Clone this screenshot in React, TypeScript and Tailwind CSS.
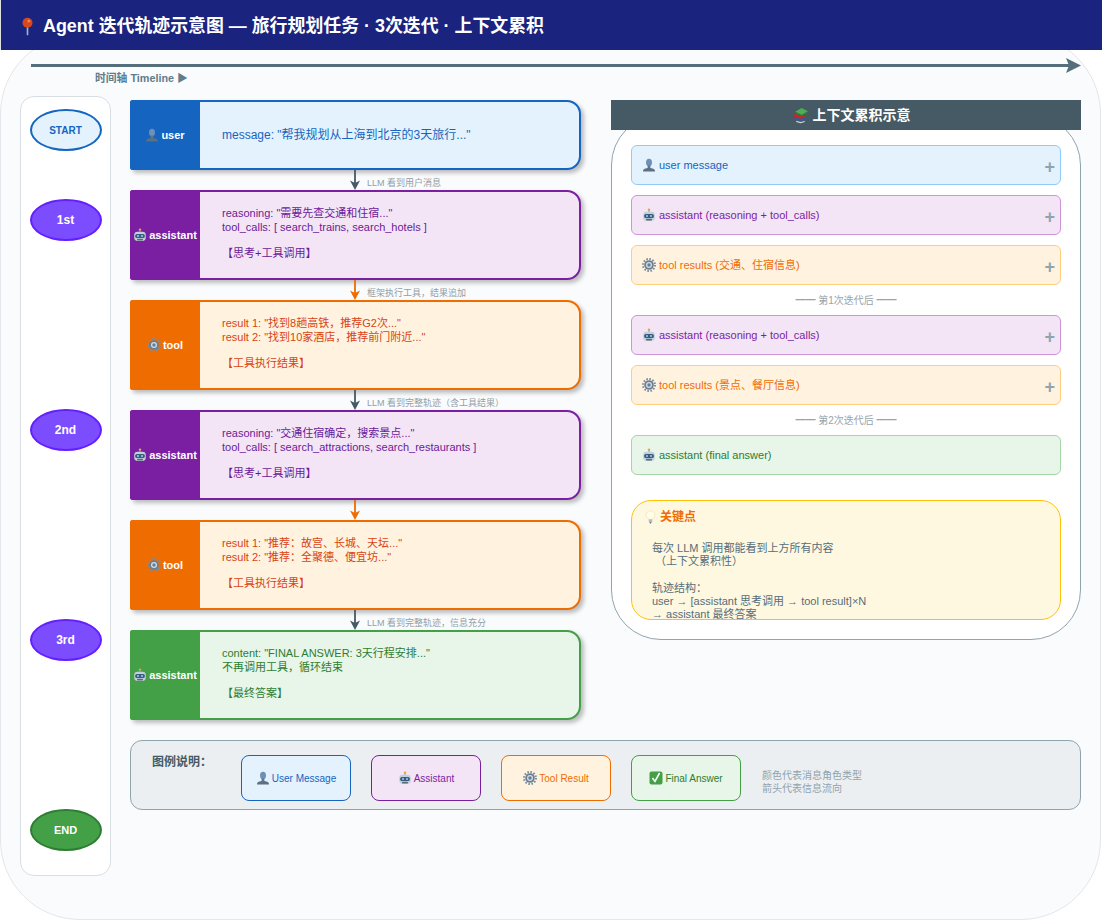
import type { ReactNode } from 'react';

function UserIcon({ className = 'w-[14px] h-[14px]' }: { className?: string }) {
  return (
    <svg viewBox="0 0 14 14" className={`${className} shrink-0`}>
      <ellipse cx="7" cy="4.6" rx="3" ry="3.8" fill="#6f8fb4" />
      <rect x="5.6" y="7.5" width="2.8" height="3" fill="#5f7890" />
      <path d="M1 13.5c0-2.4 2.4-3.4 6-3.4s6 1 6 3.4z" fill="#5c6f84" />
    </svg>
  );
}

function RobotIcon({ className = 'w-[14px] h-[14px]' }: { className?: string }) {
  return (
    <svg viewBox="0 0 14 14" className={`${className} shrink-0`}>
      <circle cx="7" cy="1.6" r="1.2" fill="#f6a623" />
      <rect x="6.5" y="2" width="1" height="2.4" fill="#8d99a6" />
      <rect x="1.2" y="3.8" width="11.6" height="9.2" rx="3.4" fill="#c3d0db" />
      <rect x="2.2" y="6" width="9.6" height="4" rx="1.6" fill="#3d5a80" />
      <circle cx="5" cy="8" r="1" fill="#8fd3f4" />
      <circle cx="9" cy="8" r="1" fill="#8fd3f4" />
      <rect x="4" y="10.8" width="6" height="1.6" rx="0.6" fill="#5b6b7b" />
    </svg>
  );
}

function GearIcon({ className = 'w-[14px] h-[14px]' }: { className?: string }) {
  return (
    <svg viewBox="0 0 14 14" className={`${className} shrink-0`}>
      <circle cx="7" cy="7" r="6" fill="none" stroke="#7e8c99" strokeWidth="2" strokeDasharray="1.6 1.5" />
      <circle cx="7" cy="7" r="4.8" fill="#6b7f92" />
      <circle cx="7" cy="7" r="3" fill="#d5dde4" />
      <circle cx="7" cy="7" r="1.7" fill="#5f7f9e" />
    </svg>
  );
}

function BooksIcon() {
  return (
    <svg viewBox="0 0 16 16" className="w-[17px] h-[17px] shrink-0">
      <path d="M3 4.5 9 1l6 3-6 3.6z" fill="#4caf50" />
      <path d="M3 4.5 9 7.6l6-3v1.4L9 9 3 6z" fill="#2e7d32" />
      <path d="M1.5 7.5 3 6.4 9 9l3-1v1.5L8 11 1.5 9z" fill="#c62828" />
      <path d="M3 10l5 1.6 4-1.2v1.4L8 13.2 3 11.6z" fill="#3f51b5" />
      <path d="M4 13l4 1.2 4-1.1v1L8 15.4 4 14.2z" fill="#cfd8dc" />
    </svg>
  );
}

function PinIcon() {
  return (
    <svg viewBox="0 0 14 20" className="w-[13px] h-[19px] shrink-0">
      <rect x="6.1" y="8" width="1.8" height="11.5" rx="0.9" fill="#9eb2bf" />
      <circle cx="7" cy="6" r="5.4" fill="#d9481c" />
      <circle cx="8.4" cy="4.2" r="1.5" fill="#f08a5d" />
    </svg>
  );
}

function BulbIcon() {
  return (
    <svg viewBox="0 0 12 16" className="w-[11px] h-[15px] shrink-0">
      <circle cx="6" cy="5.4" r="4.8" fill="#fffde7" stroke="#f3e2b3" strokeWidth="0.8" />
      <rect x="4" y="10" width="4" height="2.6" fill="#b7bcc0" />
      <path d="M4.5 12.6h3L6 15z" fill="#6f7b85" />
    </svg>
  );
}

function CheckIcon() {
  return (
    <svg viewBox="0 0 14 14" className="w-[14px] h-[14px] shrink-0">
      <rect x="0.5" y="0.5" width="13" height="13" rx="2" fill="#43a047" />
      <path d="M3.4 7l2.6 3.4L10.6 2" fill="none" stroke="#fff" strokeWidth="1.6" />
    </svg>
  );
}

const stages = [
  { label: 'START', cls: 'mt-[12px] bg-[#e3f2fd] border-[#1565c0] text-[#1565c0] text-[10px]' },
  { label: '1st', cls: 'mt-[48px] bg-[#7c4dff] border-[#651fff] text-white text-[12px]' },
  { label: '2nd', cls: 'mt-[168px] bg-[#7c4dff] border-[#651fff] text-white text-[12px]' },
  { label: '3rd', cls: 'mt-[168px] bg-[#7c4dff] border-[#651fff] text-white text-[12px]' },
  { label: 'END', cls: 'mt-[148px] bg-[#43a047] border-[#2e7d32] text-white text-[11px]' },
];

const roleStyles = {
  user: { card: 'bg-[#e3f2fd] border-[#1565c0]', side: 'bg-[#1565c0]', text: 'text-[#1565c0] text-[12px]' },
  assistant: { card: 'bg-[#f3e5f5] border-[#7b1fa2]', side: 'bg-[#7b1fa2]', text: 'text-[#6a1b9a] text-[11px]' },
  tool: { card: 'bg-[#fff3e0] border-[#ef6c00]', side: 'bg-[#ef6c00]', text: 'text-[#d84315] text-[11px]' },
  final: { card: 'bg-[#e8f5e9] border-[#43a047]', side: 'bg-[#43a047]', text: 'text-[#2e7d32] text-[11px]' },
};

type Role = keyof typeof roleStyles;

function Card({ role, name, icon, lines, tall = true }: { role: Role; name: string; icon: ReactNode; lines: string[]; tall?: boolean }) {
  const s = roleStyles[role];
  return (
    <div className={`flex ${tall ? 'h-[90px]' : 'h-[70px]'} rounded-r-[14px] rounded-l-[3px] border-2 ${s.card} shadow-[3px_3px_4px_rgba(0,0,0,0.25)]`}>
      <div className={`w-[70px] shrink-0 -ml-[2px] -my-[2px] rounded-l-[3px] flex items-center justify-center gap-[2px] text-white text-[11px] font-bold ${s.side}`}>
        {icon}
        <span>{name}</span>
      </div>
      <div className={`flex-1 pl-[22px] ${tall ? 'pb-[2px]' : 'pt-[1px]'} flex flex-col justify-center leading-[13.3px] whitespace-pre ${s.text}`}>
        {lines.map((l, i) => (
          <div key={i} className="h-[13.3px]">{l}</div>
        ))}
      </div>
    </div>
  );
}

function Arrow({ color = '#455a64', label }: { color?: string; label?: string }) {
  return (
    <div className="h-[20px] flex items-center pl-[220px]">
      <svg viewBox="0 0 10 20" className="w-[10px] h-[20px] shrink-0">
        <rect x="4.1" y="0" width="1.8" height="14" fill={color} />
        <path d="M0 10.5 5 13 10 10.5 5 20z" fill={color} />
      </svg>
      {label && <span className="ml-[7px] mt-[7px] text-[9px] text-[#929ea5]">{label}</span>}
    </div>
  );
}

const ctxStyles = {
  user: 'bg-[#e3f2fd] border-[#90caf9] text-[#1565c0]',
  assistant: 'bg-[#f3e5f5] border-[#ce93d8] text-[#7b1fa2]',
  tool: 'bg-[#fff3e0] border-[#ffcc80] text-[#ef6c00]',
  final: 'bg-[#e8f5e9] border-[#a5d6a7] text-[#2e7d32]',
};

function CtxItem({ kind, icon, text, plus = true }: { kind: keyof typeof ctxStyles; icon: ReactNode; text: string; plus?: boolean }) {
  return (
    <div className={`h-[40px] shrink-0 rounded-[6px] border flex items-center justify-between pl-[10px] pr-[5px] text-[11px] ${ctxStyles[kind]}`}>
      <div className="flex items-center gap-[3px]">
        {icon}
        <span>{text}</span>
      </div>
      {plus && <span className="mt-[3px] text-[18px] leading-none font-bold text-[#90a4ae]">+</span>}
    </div>
  );
}

function Separator({ text }: { text: string }) {
  return <div className="h-[30px] pt-[1px] flex items-center justify-center text-[10px] text-[#9aa3a8]">{text}</div>;
}

const legend = [
  { cls: 'bg-[#e3f2fd] border-[#1565c0] text-[#1565c0]', icon: <UserIcon />, label: 'User Message' },
  { cls: 'bg-[#f3e5f5] border-[#7b1fa2] text-[#7b1fa2]', icon: <RobotIcon />, label: 'Assistant' },
  { cls: 'bg-[#fff3e0] border-[#ef6c00] text-[#ef6c00]', icon: <GearIcon />, label: 'Tool Result' },
  { cls: 'bg-[#e8f5e9] border-[#43a047] text-[#2e7d32]', icon: <CheckIcon />, label: 'Final Answer' },
];

export default function App() {
  return (
    <div className="w-[1102px] h-[922px] overflow-hidden bg-white font-['Liberation_Sans','Noto_Sans_CJK_SC',sans-serif]">
      <header className="relative z-10 h-[50px] bg-[#1a237e] border-l border-[#e0e0e0] flex items-center pl-[20px] pt-[2px] gap-[9px] text-white text-[17.9px] font-bold">
        <PinIcon />
        <span>Agent 迭代轨迹示意图 — 旅行规划任务 · 3次迭代 · 上下文累积</span>
      </header>

      <main className="-mt-[16px] w-[1101px] h-[886px] box-border rounded-[80px] border border-[#e3e6ea] bg-[#fafbfd] pt-[23px]">
        <svg viewBox="0 0 1050 16" className="ml-[30px] w-[1050px] h-[16px] block">
          <rect x="0" y="6" width="1040" height="3" fill="#546e7a" />
          <path d="M1035 0 1050 7.5 1035 15 1038 7.5z" fill="#546e7a" />
        </svg>
        <div className="ml-[94px] -mt-[2px] h-[12px] leading-[12px] text-[10.8px] font-bold text-[#607d8b]">时间轴 Timeline ▶</div>

        <div className="mt-[12px] pl-[19px] flex gap-[19px] items-start">
          <div className="w-[91px] h-[780px] shrink-0 rounded-[14px] border border-[#d9dee3] bg-white flex flex-col items-center">
            {stages.map((st) => (
              <div key={st.label} className={`w-[72px] h-[42px] shrink-0 rounded-[50%] border-2 flex items-center justify-center font-bold ${st.cls}`}>
                {st.label}
              </div>
            ))}
          </div>

          <div className="w-[951px] pt-[4px]">
            <div className="flex gap-[30px] items-start">
              <div className="w-[451px] shrink-0">
                <Card role="user" name="user" tall={false} icon={<UserIcon />} lines={['message: "帮我规划从上海到北京的3天旅行..."']} />
                <Arrow label="LLM 看到用户消息" />
                <Card role="assistant" name="assistant" icon={<RobotIcon />} lines={['reasoning: "需要先查交通和住宿..."', 'tool_calls: [ search_trains, search_hotels ]', '', '【思考+工具调用】']} />
                <Arrow color="#ef6c00" label="框架执行工具，结果追加" />
                <Card role="tool" name="tool" icon={<GearIcon />} lines={['result 1: "找到8趟高铁，推荐G2次..."', 'result 2: "找到10家酒店，推荐前门附近..."', '', '【工具执行结果】']} />
                <Arrow label="LLM 看到完整轨迹（含工具结果）" />
                <Card role="assistant" name="assistant" icon={<RobotIcon />} lines={['reasoning: "交通住宿确定，搜索景点..."', 'tool_calls: [ search_attractions, search_restaurants ]', '', '【思考+工具调用】']} />
                <Arrow color="#ef6c00" />
                <Card role="tool" name="tool" icon={<GearIcon />} lines={['result 1: "推荐：故宫、长城、天坛..."', 'result 2: "推荐：全聚德、便宜坊..."', '', '【工具执行结果】']} />
                <Arrow label="LLM 看到完整轨迹，信息充分" />
                <Card role="final" name="assistant" icon={<RobotIcon />} lines={['content: "FINAL ANSWER: 3天行程安排..."', '不再调用工具，循环结束', '', '【最终答案】']} />
              </div>

              <div className="w-[470px] shrink-0">
                <div className="relative z-[1] h-[30px] bg-[#455a64] pl-[10px] flex items-center justify-center gap-[4px] text-white text-[14px] font-bold">
                  <BooksIcon />
                  <span>上下文累积示意</span>
                </div>
                <div className="-mt-[15px] h-[525px] box-border rounded-[50px] border border-[#90a4ae] bg-white px-[19px] pt-[29px] flex flex-col">
                  <div className="flex flex-col gap-[10px]">
                    <CtxItem kind="user" icon={<UserIcon />} text="user message" />
                    <CtxItem kind="assistant" icon={<RobotIcon />} text="assistant (reasoning + tool_calls)" />
                    <CtxItem kind="tool" icon={<GearIcon />} text="tool results (交通、住宿信息)" />
                  </div>
                  <Separator text="━━ 第1次迭代后 ━━" />
                  <div className="flex flex-col gap-[10px]">
                    <CtxItem kind="assistant" icon={<RobotIcon />} text="assistant (reasoning + tool_calls)" />
                    <CtxItem kind="tool" icon={<GearIcon />} text="tool results (景点、餐厅信息)" />
                  </div>
                  <Separator text="━━ 第2次迭代后 ━━" />
                  <CtxItem kind="final" plus={false} icon={<RobotIcon />} text="assistant (final answer)" />
                  <div className="mt-[25px] h-[120px] shrink-0 box-border overflow-hidden rounded-[20px] border border-[#ffc107] bg-[#fff8e1] pl-[13px] pt-[9px]">
                    <div className="flex items-center gap-[4px] text-[12px] leading-[15px] font-bold text-[#ef6c00]">
                      <BulbIcon />
                      <span>关键点</span>
                    </div>
                    <div className="mt-[17px] pl-[7px] text-[11px] leading-[13.3px] whitespace-pre text-[#546e7a]">
                      <div className="h-[13.3px]">每次 LLM 调用都能看到上方所有内容</div>
                      <div className="h-[13.3px]"> （上下文累积性）</div>
                      <div className="h-[13.3px]"></div>
                      <div className="h-[13.3px]">轨迹结构：</div>
                      <div className="h-[13.3px]">user → [assistant 思考调用 → tool result]×N</div>
                      <div className="h-[13.3px]">→ assistant 最终答案</div>
                    </div>
                  </div>
                </div>
              </div>
            </div>

            <div className="mt-[20px] h-[70px] box-border rounded-[12px] border border-[#90a4ae] bg-[#eceff1] flex items-start pl-[21px] pt-[14px]">
              <div className="w-[89px] shrink-0 text-[12px] leading-[14px] font-bold text-[#455a64]">图例说明：</div>
              <div className="flex gap-[20px]">
                {legend.map((item) => (
                  <div key={item.label} className={`w-[110px] h-[46px] rounded-[8px] border flex items-center justify-center gap-[2px] text-[10px] ${item.cls}`}>
                    {item.icon}
                    <span>{item.label}</span>
                  </div>
                ))}
              </div>
              <div className="ml-[21px] mt-[14px] text-[10px] leading-[13px] text-[#90a4ae]">
                <div>颜色代表消息角色类型</div>
                <div>箭头代表信息流向</div>
              </div>
            </div>
          </div>
        </div>
      </main>
    </div>
  );
}
